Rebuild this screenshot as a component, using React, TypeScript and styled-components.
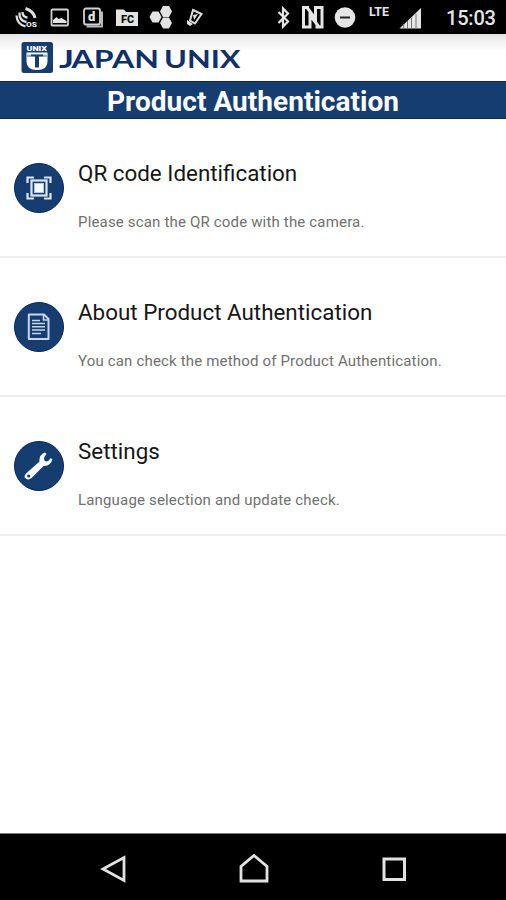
import React from "react";
import styled, { createGlobalStyle } from "styled-components";

const navy = "#153d70";
const logoNavy = "#0f3068";

const GlobalStyle = createGlobalStyle`
  * { box-sizing: border-box; }
  body { margin: 0; background: #fff; font-family: Roboto, sans-serif; }
  svg { display: block; flex: none; }
`;

const Screen = styled.div`
  width: 506px;
  height: 900px;
  display: flex;
  flex-direction: column;
  overflow: hidden;
  background: #fff;
`;

const StatusBar = styled.div`
  height: 34px;
  flex: none;
  display: flex;
  justify-content: space-between;
  background: #000;
  color: #e6e6e6;
`;

const Clock = styled.time`
  width: 60px;
  margin-left: 20px;
  font-size: 20px;
  font-weight: 500;
  line-height: 36px;
  letter-spacing: -0.2px;
`;

const StatusGroup = styled.div`
  display: flex;
`;

const BrandBar = styled.header`
  height: 47px;
  flex: none;
  background: linear-gradient(#e3e3e3 0, #f1f1f1 7px, #fff 17px);
`;

const TitleBar = styled.h1`
  height: 38px;
  flex: none;
  margin: 0;
  border: solid #082560;
  border-width: 1px 0;
  background: ${navy};
  color: #fff;
  text-align: center;
  font-size: 28px;
  font-weight: 700;
  line-height: 40px;
  letter-spacing: 0.03px;
`;

const Menu = styled.nav`
  flex: 1;
`;

const MenuRow = styled.div`
  height: 139px;
  display: flex;
  padding: 0 14px;
  gap: 14px;
  border-bottom: 2px solid #efefef;
`;

const Badge = styled.div`
  width: 50px;
  height: 50px;
  flex: none;
  margin-top: 44px;
  border-radius: 50%;
  border: 1px solid #082560;
  background: ${navy};
  display: grid;
  place-items: center;
`;

const RowText = styled.div`
  display: flex;
  flex-direction: column;
  padding-top: 39px;
`;

const RowTitle = styled.h2`
  margin: 0;
  color: #161616;
  font-size: 22.4px;
  font-weight: 400;
  line-height: 30px;
  white-space: nowrap;
`;

const RowDetail = styled.p`
  margin: 24px 0 0;
  color: #707070;
  font-size: 15px;
  line-height: 20px;
  white-space: nowrap;
  letter-spacing: 0.17px;
`;

const NavBar = styled.footer`
  height: 67px;
  flex: none;
  display: flex;
  justify-content: space-between;
  padding: 20px 97px 0 98px;
  border-top: 1px solid #777;
  background: #000;
`;

const NotificationIcons = () => (
  <svg width="210" height="34" fill="#e3e3e3">
    <g fill="none" stroke="#dedede" strokeWidth="2">
      <path d="M16.500 15.500q.5 9 9 11M19.500 12.500q-.5 8.500 7 9.500M22.500 12q0 5 5 5.500" strokeWidth="2.300" />
      <path d="M25.500 8.500q8 2.500 9.500 9.500" strokeWidth="3.200" />
    </g>
    <text x="26" y="27" fontSize="8" fontWeight="900" textLength="11" lengthAdjust="spacingAndGlyphs">OS</text>

    <rect x="51.500" y="9.500" width="16.500" height="16" rx="1" fill="none" stroke="#d2d2d2" strokeWidth="1.800" />
    <path d="M53 23v-3l3.500-3 2 2 3-1 5 3v2z" />

    <path d="M86.500 26.500H102V11.500" fill="none" stroke="#b8b8b8" strokeWidth="2" />
    <rect x="84" y="8.500" width="16" height="16" rx="2" fill="#000" stroke="#d4d4d4" strokeWidth="1.800" />
    <text x="88" y="21" fontSize="13" fontWeight="900">d</text>

    <path d="M116 9.500h8l2 2.500h12v14h-22z" />
    <text x="121" y="23" fontSize="10" fontWeight="900" fill="#111" textLength="13" lengthAdjust="spacingAndGlyphs">FC</text>

    <path d="M149.500 17l3-5.500h6l3 5.500-3 5.500h-6z" />
    <path d="M160 11.500l3-5.500h6l3 5.500-3 5.500h-6zM160 23l3-5.500h6l3 5.500-3 5.500h-6z" />

    <path d="M193 10l8.500 4-6.500 9.500-5-3z" fill="none" stroke="#dedede" strokeWidth="2" />
    <path d="M187 20l6 4-3 2-3-2zM193 15l5-1-4 6z" />
  </svg>
);

const SystemIcons = () => (
  <svg width="154" height="34" fill="#e6e6e6">
    <g transform="translate(2 0)">
      <path d="M4.500 12l9.500 9.500-5 5V8.500l5 5-9.500 9.500" fill="none" stroke="#e6e6e6" strokeWidth="2.200" />
      <path d="M35 7.500h-5.500v19.500H36V15l9 12M41.500 27H48V7.500h-6.500V19L33 7.500" fill="none" stroke="#e6e6e6" strokeWidth="3" />
      <circle cx="71" cy="17.500" r="10.300" />
      <path d="M66 17.500h10" stroke="#222" strokeWidth="2" />
      <text x="95" y="16" fontSize="13" fontWeight="700" textLength="20" lengthAdjust="spacingAndGlyphs">LTE</text>
      <path d="M125.500 28.500L147 8v20.500z" />
      <path d="M129.700 24v4.500M133.500 21v7.500M137.500 17.500v11M142 14v14.500" stroke="#777" strokeWidth="1" />
    </g>
  </svg>
);

const Brand = () => (
  <svg width="250" height="47">
    <rect x="21.500" y="8" width="31.500" height="31" rx="2.500" fill={navy} />
    <text x="26.500" y="16.500" fill="#fff" fontFamily="Roboto" fontSize="7.500" fontWeight="900" textLength="20.500" lengthAdjust="spacingAndGlyphs">UNIX</text>
    <path d="M26.500 18.500h21v9q0 8.500-10.500 8.500T26.500 27.500z" fill="#fff" />
    <path d="M26.500 20.500h21v2.500h-21z" fill="#9eb1cb" />
    <path d="M31 20.500h12v1.800h-4v11.200h-4V22.300h-4z" fill={navy} />
    <g fill={logoNavy} fontFamily="Lato" fontSize="25" fontWeight="700">
      <text x="59" y="34" textLength="15" lengthAdjust="spacingAndGlyphs">J</text>
      <text x="71.500" y="34" textLength="87.500" lengthAdjust="spacingAndGlyphs">APAN</text>
      <text x="164" y="34" textLength="76.500" lengthAdjust="spacingAndGlyphs">UNIX</text>
    </g>
  </svg>
);

const ScanIcon = () => (
  <svg width="26" height="24" viewBox="0 0 26 24" fill="none" stroke="#dce5f5">
    <path d="M1.500 7V1.500H8M18 1.500h6.500V7M24.500 17v5.500H18M8 22.500H1.500V17" strokeWidth="2.200" />
    <rect x="5.500" y="4.500" width="15" height="15" strokeWidth="2.200" />
    <rect x="8.500" y="7.500" width="9" height="9" fill="#f8faff" stroke="#b9c8e8" strokeWidth="1" />
  </svg>
);

const DocumentIcon = () => (
  <svg width="24" height="28" viewBox="0 0 24 28" fill="none" stroke="#cbd5eb">
    <path d="M1.800 1.500H17l4.500 4.500v20H1.800z" strokeWidth="2" strokeLinejoin="round" />
    <path d="M16.500 2v5h5M5 7.500h8M5 10.500h13M5 13.700h13M5 17h13M5 20.500h9" strokeWidth="1.600" />
  </svg>
);

const WrenchIcon = () => (
  <svg width="30" height="28" viewBox="0 0 30 28">
    <path
      fill="#fff"
      d="M21 .5q-6.500 2.500-5.500 9L2 21.500q-3 3.500 0 5 2.500 2 5.500-.5L19.500 14q7 .5 9-7l-2-.8q-2.500 4.300-5.500 2.800-2.500-2.500 1.500-7z"
    />
    <circle cx="4.700" cy="24" r="1.600" fill={navy} />
  </svg>
);

const items = [
  { title: "QR code Identification", detail: "Please scan the QR code with the camera.", Icon: ScanIcon },
  { title: "About Product Authentication", detail: "You can check the method of Product Authentication.", Icon: DocumentIcon },
  { title: "Settings", detail: "Language selection and update check.", Icon: WrenchIcon },
];

export default function App() {
  return (
    <Screen>
      <GlobalStyle />
      <StatusBar>
        <NotificationIcons />
        <StatusGroup>
          <SystemIcons />
          <Clock>15:03</Clock>
        </StatusGroup>
      </StatusBar>
      <BrandBar>
        <Brand />
      </BrandBar>
      <TitleBar>Product Authentication</TitleBar>
      <Menu>
        {items.map(({ title, detail, Icon }) => (
          <MenuRow key={title}>
            <Badge>
              <Icon />
            </Badge>
            <RowText>
              <RowTitle>{title}</RowTitle>
              <RowDetail>{detail}</RowDetail>
            </RowText>
          </MenuRow>
        ))}
      </Menu>
      <NavBar>
        <svg width="30" height="30" fill="none" stroke="#e2e2e2" strokeWidth="2.800">
          <path d="M26 3.500v23L5 15z" />
        </svg>
        <svg width="30" height="30" fill="none" stroke="#e2e2e2" strokeWidth="2.800">
          <path d="M2 27V12.500L15 1.500l13 11V27z" />
        </svg>
        <svg width="30" height="30" fill="none" stroke="#e2e2e2" strokeWidth="3">
          <rect x="5" y="5" width="20.500" height="20.500" />
        </svg>
      </NavBar>
    </Screen>
  );
}
